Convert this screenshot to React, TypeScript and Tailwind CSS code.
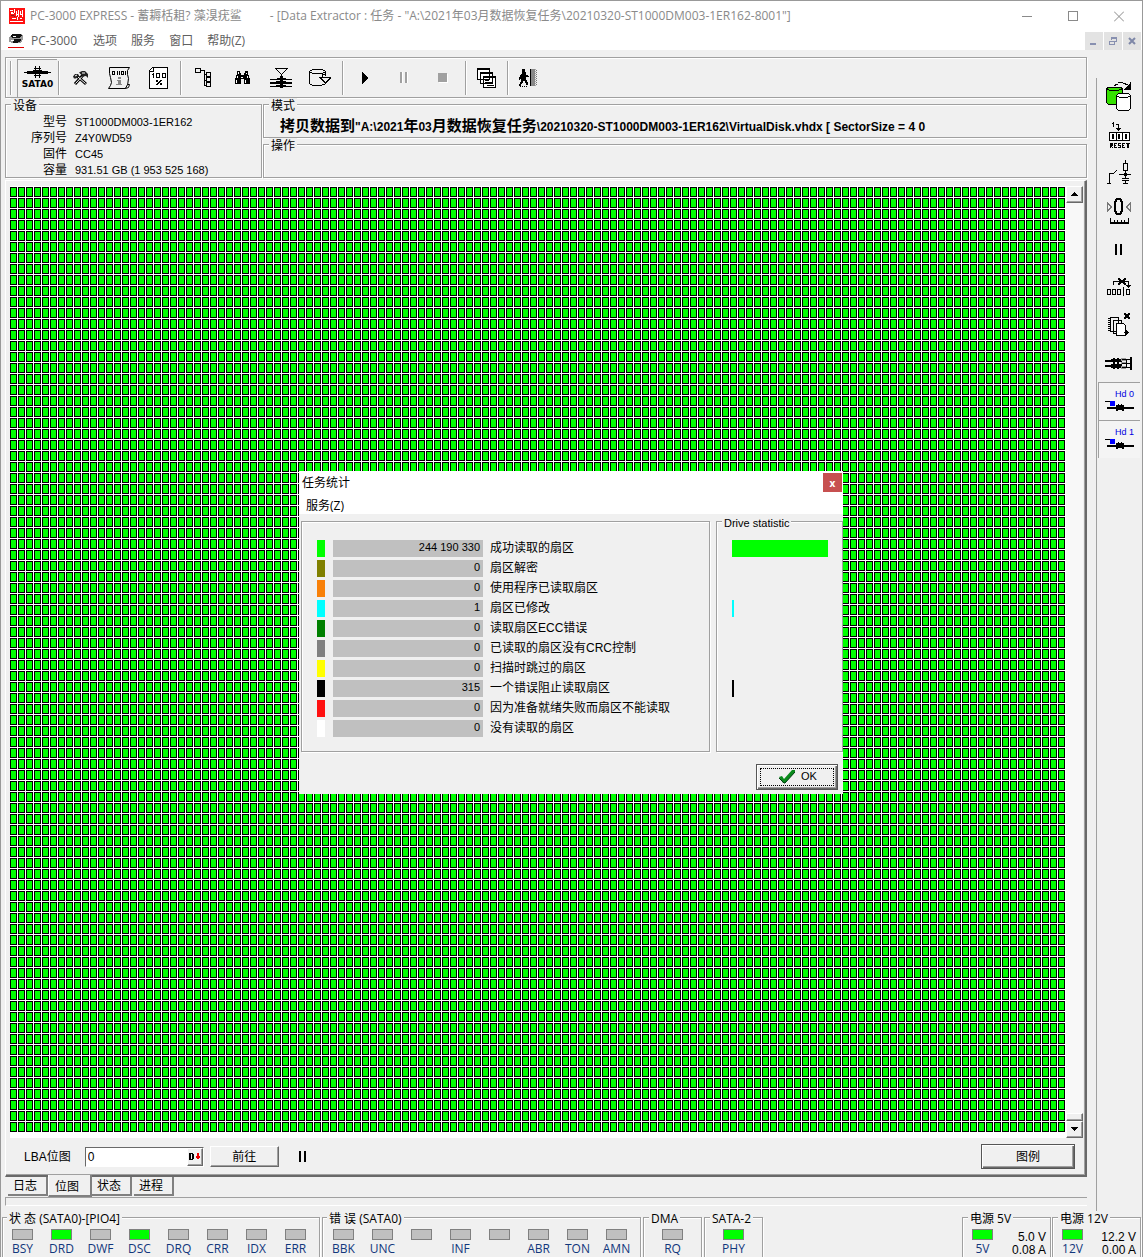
import React from "react";

const UI = "font-['Liberation_Sans','Noto_Sans_CJK_SC',sans-serif]";
const SEGOE = "font-['Open_Sans','Noto_Sans_CJK_SC',sans-serif]";
const ETCHED = "border border-[#a0a0a0] shadow-[1px_1px_0_#fff,inset_1px_1px_0_#fff]";

/* Pixel-aligned icon: the view box is given as x, y, width, height. */
function Pix({ box, children }: { box: [number, number, number, number]; children: React.ReactNode }) {
  return (
    <svg
      width={box[2]}
      height={box[3]}
      viewBox={box.join(" ")}
      shapeRendering="crispEdges"
      fill="none"
      stroke="none"
      className="block shrink-0"
      aria-hidden="true"
    >
      {children}
    </svg>
  );
}

function ToolButton({ label, children, narrow }: { label: string; children: React.ReactNode; narrow?: boolean }) {
  return (
    <button aria-label={label} className={`flex h-9 shrink-0 items-center justify-center ${narrow ? "w-9" : "w-[39px]"}`}>
      {children}
    </button>
  );
}

function Sep({ tight }: { tight?: boolean }) {
  return <div className={`h-[34px] w-0.5 shrink-0 border-l border-r border-l-[#a0a0a0] border-r-white ${tight ? "mx-px" : "mx-0.5"}`} />;
}

function Group({ title, className, titleClass, children }: { title: string; className: string; titleClass: string; children?: React.ReactNode }) {
  return (
    <section className={`relative ${ETCHED} ${className}`}>
      <h2 className={`absolute -top-2 whitespace-pre bg-[#f0f0f0] px-0.5 text-[12px] leading-4 ${titleClass}`}>{title}</h2>
      {children}
    </section>
  );
}

function TitleBar() {
  return (
    <header className={`bg-white ${SEGOE}`}>
      <div className="flex h-[30px] items-center pl-2 text-[12px] text-[#8a8a8a]">
        <Pix box={[9, 7, 16, 16]}>
          <rect x="9" y="7" width="16" height="16" fill="#ff1010" />
          <path d="M10 9h3v1h-3zM11 11h2v1h1v1h-3zM14 8h1v4h-1zM16 10h1v5h-1zM17 13h2v1h-2zM18 9h1v7h-1zM20 13h2v1h-2zM22 9h1v7h-1zM20 10h1v3h-1zM12 17h4v1h-4zM17 16h1v3h-1zM10 20h13v1h-13zM20 17h2v1h-2z" fill="#fff" />
          <path d="M11 14h3v1h-3zM14 15h1v1h-1z" fill="#802020" />
        </Pix>
        <h1 className="ml-[5px] whitespace-pre">PC-3000 EXPRESS - 蓄耨栝耝? 藻湨疣鲨</h1>
        <p className="ml-7 whitespace-pre">- [Data Extractor : 任务 - "A:\2021年03月数据恢复任务\20210320-ST1000DM003-1ER162-8001"]</p>
        <div className="ml-auto flex">
          <button aria-label="Minimize" className="flex h-[29px] w-[45px] items-center justify-center">
            <Pix box={[0, 0, 11, 11]}><path d="M0 5.500h10" stroke="#8a8a8a" /></Pix>
          </button>
          <button aria-label="Maximize" className="flex h-[29px] w-[46px] items-center justify-center">
            <Pix box={[0, 0, 10, 11]}><rect x=".5" y=".5" width="9" height="9" stroke="#8a8a8a" /></Pix>
          </button>
          <button aria-label="Close" className="flex h-[29px] w-[46px] items-center justify-center">
            <svg width="10" height="11" viewBox="0 0 10 11"><path d="M0 .5l10 10M10 .5l-10 10" stroke="#8a8a8a" /></svg>
          </button>
        </div>
      </div>
      <nav className="flex h-[19px] items-center pl-[7px] text-[12px] text-[#606060]">
        <Pix box={[8, 33, 16, 15]}>
          <path d="M12 34h9l2 1v4l-2 4h-9l-3-1v-4z" fill="#999" />
          <path d="M10 36l3-2h8l1 2-3 2h-7zM14 39h7v2l-4 2h-4z" fill="#111" />
          <path d="M13 36.500h3M11 40.500h3" stroke="#fff" />
          <path d="M8 47.500h16" stroke="#e00000" />
        </Pix>
        <button className="ml-[7px]">PC-3000</button>
        <button className="ml-4">选项</button>
        <button className="ml-[14px]">服务</button>
        <button className="ml-[14px]">窗口</button>
        <button className="ml-[14px]">帮助(Z)</button>
        <div className="ml-auto flex gap-px self-end pr-px">
          <button aria-label="Minimize child" className="h-[18px] w-[18px] bg-[#e3e3e3]">
            <Pix box={[0, 0, 18, 18]}><rect x="5" y="11" width="6" height="2" fill="#8890b0" /></Pix>
          </button>
          <button aria-label="Restore child" className="h-[18px] w-[18px] bg-[#e3e3e3]">
            <Pix box={[0, 0, 18, 18]}>
              <path d="M7.500 8V5.500h5v4H11M7 6.500h6M5.500 9.500h5v3h-5zM5 9.500h6" stroke="#8890b0" />
            </Pix>
          </button>
          <button aria-label="Close child" className="h-[18px] w-[18px] bg-[#e3e3e3]">
            <svg width="18" height="18" viewBox="0 0 18 18"><path d="M6 6l6 6M12 6l-6 6" stroke="#7f88a8" strokeWidth="2" /></svg>
          </button>
        </div>
      </nav>
    </header>
  );
}

function Toolbar() {
  return (
    <div className={`mt-[7px] flex h-[41px] items-center ${ETCHED}`}>
      <div className="ml-1 mr-[5px] h-[34px] w-0.5 border-l border-r border-l-[#a0a0a0] border-r-white" />
      <button className="flex h-[38px] w-10 flex-col items-center border-l border-t border-[#a0a0a0] pt-1.5">
        <Pix box={[22, 68, 31, 13]}>
          <path d="M24 74h27v1H24zM27 73h7v3h-7zM40 73h8v3h-8zM33 72h9v4h-9zM35 68h1v12h-1zM39 68h1v12h-1zM34 70h7v1h-7zM34 77h7v1h-7z" fill="#000" />
        </Pix>
        <span className="font-['DejaVu_Sans',sans-serif] text-[9px] font-bold leading-[11px]">SATA0</span>
      </button>
      <Sep tight />
      <ToolButton label="Tools">
        <svg width="19" height="18" viewBox="0 0 19 18" aria-hidden="true">
          <path d="M6 7l9 8M12 6l-8 9" stroke="#000" strokeWidth="3" />
          <path d="M7 8l7.500 6.500M11 7.500l-6.500 7" stroke="#fff" />
          <path d="M2 7.500l2-2.500h3l1 1.500-3 3H3z" fill="#222" />
          <path d="M4 7l2-1" stroke="#fff" />
          <path d="M8 3.500l3-1.500h3l3 3v4l-2-2-3 .5-2-2z" fill="#222" />
          <path d="M11 4h3" stroke="#fff" />
        </svg>
      </ToolButton>
      <ToolButton label="Firmware data">
        <svg width="25" height="24" viewBox="107 65 25 24" fill="none" aria-hidden="true">
          <path d="M109.500 66.500h20l-2 3v4l1 4-1 7-2 3h-17l2-3 1-3-1-5-1-4z" stroke="#000" />
          <path d="M125.500 87.500l2-4h2l-1 3z" fill="#fff" stroke="#000" />
          <path d="M112.500 70.500h2v3h-2zM117.500 70v4M119.500 70v4M121.500 70.500h2v3h-2zM125.500 70v4" stroke="#000" shapeRendering="crispEdges" />
          <path d="M118 76h3v2h-3zM117 79h4v4h1v1h-6v-1h2v-3h-1z" fill="#888" />
        </svg>
      </ToolButton>
      <ToolButton label="Progress">
        <Pix box={[147, 66, 23, 24]}>
          <path d="M152.500 67.500h15v21h-18v-18z" fill="#fff" stroke="#000" />
          <path d="M153.500 67v4.500H149" stroke="#000" />
          <path d="M153 73h1v5h-1zM152 74h1v1h-1zM156 73h4v5h-4zM162 73h4v5h-4zM156 80h2v2h-2zM161 80h1v1h-1v1h-1v1h-1v1h-1v1h-2v-1h1v-1h1v-1h1v-1h1v-1zM160 83h2v2h-2z" fill="#000" />
          <path d="M157 74h2v3h-2zM163 74h2v3h-2z" fill="#fff" />
        </Pix>
      </ToolButton>
      <Sep />
      <ToolButton label="Tree">
        <Pix box={[193, 68, 21, 22]}>
          <path d="M195.500 69.500h5v4h-5zM201 71.500h3.500v15M204 75.500h2M204 81.500h2M204 86.500h2M206.500 73.500h4v4h-4zM206.500 78.500h4v4h-4zM206.500 83.500h4v4h-4z" stroke="#000" />
        </Pix>
      </ToolButton>
      <ToolButton label="Search">
        <Pix box={[233, 69, 17, 16]}>
          <path d="M236 70h3v2h1v2h3v-2h1v-2h3v3l2 5v5h-6v-5h-3v5h-6v-5l2-5z" fill="#000" />
          <path d="M237.500 71v2M236.500 75v2M235.500 79v3M245.500 72v1M246.500 75v2M244.500 79v3M240 76.500h2" stroke="#fff" />
        </Pix>
      </ToolButton>
      <ToolButton label="Head map">
        <Pix box={[269, 67, 25, 22]}>
          <path d="M275 68h13v1h-13zM276 69h1v1h1v1h1v1h1v1h1v1h1v-1h1v-1h1v-1h1v-1h1v-1h1v1h-1v1h-1v1h-1v1h-1v1h-1v4h-1v-4h-1v-1h-1v-1h-1v-1h-1v-1h-1z" fill="#000" />
          <path d="M270 79h22v1h-22zM270 82h22v2h-22zM270 86h22v1h-22zM277 78h9v2h-9zM276 81h10v3h-10zM276 85h10v2h-10zM280 76h3v12h-3z" fill="#000" />
        </Pix>
      </ToolButton>
      <ToolButton label="Disk copy">
        <Pix box={[309, 68, 25, 20]}>
          <path d="M313 69h11v1h-11zM311 70h2v1h-2zM324 70h2v1h-2zM310 71h1v13h-1zM326 71h1v5h-1zM311 72h2v1h-2zM324 72h2v1h-2zM313 73h11v1h-11zM311 84h2v1h-2zM313 85h10v1h-10zM323 84h3v1h-3z" fill="#000" />
          <path d="M323.500 77v-2.500h3M320 77.500h12M321.500 78l5 5 5-5" stroke="#000" />
        </Pix>
      </ToolButton>
      <Sep />
      <ToolButton label="Start"><Pix box={[362, 72, 7, 12]}><path d="M362 72l6 6-6 6z" fill="#000" /></Pix></ToolButton>
      <ToolButton label="Pause"><Pix box={[400, 73, 9, 12]}><path d="M400 73h2v11h-2zM405 73h2v11h-2z" fill="#a0a0a0" /><path d="M402.500 73v11M407.500 73v11" stroke="#fff" /></Pix></ToolButton>
      <ToolButton label="Stop"><Pix box={[438, 74, 11, 10]}><rect x="439" y="75" width="9" height="9" fill="#fff" /><rect x="438" y="74" width="9" height="9" fill="#a0a0a0" /></Pix></ToolButton>
      <Sep />
      <ToolButton label="Windows" narrow>
        <Pix box={[475, 66, 22, 22]}>
          <path d="M476.500 67.500h12v11h-12zM479.500 71.500h12v11h-12zM482.500 75.500h12v11h-12z" fill="#fff" stroke="#000" />
          <path d="M476 68.500h13M479 72.500h13M482 76.500h13M484 79.500h4M484 81.500h7M486 84.500h7" stroke="#000" />
        </Pix>
      </ToolButton>
      <Sep />
      <ToolButton label="Exit" narrow>
        <Pix box={[519, 68, 22, 20]}>
          <path d="M523 69h3v3h1v3h2v1h1v1h-3v3h1v2h1v3h-2v-2h-1v-2h-2v2h-1v1h-1v2h-2v-2h1v-2h1v-3h-1v1h-1v-3h1v-2h1v-1h1z" fill="#000" />
          <path d="M531 69h1v17h-1z" fill="#000" />
          <path d="M532 69h4v17h-4z" fill="#888" />
          <path d="M536.500 69v17" stroke="#aaa" strokeDasharray="1 1" />
          <path d="M537.500 70v16" stroke="#777" strokeDasharray="1 1" />
          <path d="M521 86.500h7" stroke="#000" strokeDasharray="1 1" />
        </Pix>
      </ToolButton>
    </div>
  );
}

const device = [
  ["型号", "ST1000DM003-1ER162"],
  ["序列号", "Z4Y0WD59"],
  ["固件", "CC45"],
  ["容量", "931.51 GB (1 953 525 168)"],
];

function InfoPanels() {
  return (
    <div className="mt-1.5 flex gap-px">
      <Group title="设备" titleClass="left-[5px] mt-px" className="h-[74px] w-[257px] shrink-0 pt-[9px]">
        <dl className="grid grid-cols-[61px_1fr] gap-x-2">
          {device.map(([k, v]) => (
            <React.Fragment key={k}>
              <dt className="text-right text-[12px] leading-4">{k}</dt>
              <dd className="text-[11px] leading-4">{v}</dd>
            </React.Fragment>
          ))}
        </dl>
      </Group>
      <div className="flex min-w-0 flex-1 flex-col gap-1.5">
        <Group title="模式" titleClass="left-[5px] mt-px" className="h-[34px] pt-3">
          <p className="overflow-hidden whitespace-pre pl-4 text-[12px] font-bold leading-[18px]">
            <span className="text-[15px]">拷贝数据到</span>"A:\2021<span className="text-[15px]">年</span>03
            <span className="text-[15px]">月数据恢复任务</span>\20210320-ST1000DM003-1ER162\VirtualDisk.vhdx [ SectorSize = 4 0
          </p>
        </Group>
        <Group title="操作" titleClass="left-[5px] mt-px" className="h-[34px]" />
      </div>
    </div>
  );
}

const RAISED = "border border-b-[#696969] border-l-white border-r-[#696969] border-t-white shadow-[inset_-1px_-1px_0_#a0a0a0] bg-[#f0f0f0]";

function MapPanel() {
  return (
    <section className="mt-0.5 flex min-h-0 flex-1 flex-col border-b-2 border-l border-r-2 border-t border-b-[#696969] border-l-white border-r-[#696969] border-t-white pl-1 pr-0.5 pt-[5px] shadow-[inset_-1px_-1px_0_#a0a0a0]">
      <div className="flex min-h-0 flex-1">
        <div className="flex min-h-0 min-w-0 flex-1 flex-col bg-white pb-1.5 pt-px">
          <svg className="block min-h-0 w-full flex-1" shapeRendering="crispEdges" role="img" aria-label="Sector map">
            <defs>
              <pattern id="sector" width="8" height="11" patternUnits="userSpaceOnUse">
                <rect width="7" height="10" fill="#000" />
                <rect x="1" y="1" width="5" height="8" fill="#00ff00" />
              </pattern>
            </defs>
            <rect width="100%" height="100%" fill="url(#sector)" />
          </svg>
        </div>
        <div className="flex w-[17px] flex-col bg-[#f8f8f8]">
          <button aria-label="Scroll up" className={`flex h-[17px] items-center justify-center ${RAISED}`}>
            <Pix box={[0, 0, 7, 5]}><path d="M0 4h7v-1h-1v-1h-1v-1h-1v-1h-1v1h-1v1h-1v1h-1z" fill="#000" /></Pix>
          </button>
          <div className={`mt-auto h-2 ${RAISED}`} />
          <button aria-label="Scroll down" className={`flex h-[17px] items-center justify-center ${RAISED}`}>
            <Pix box={[0, 0, 7, 5]}><path d="M0 0h7v1h-1v1h-1v1h-1v1h-1v-1h-1v-1h-1v-1h-1z" fill="#000" /></Pix>
          </button>
        </div>
      </div>
      <div className="flex h-[37px] items-center pl-3.5">
        <label htmlFor="lba" className="text-[12px]">LBA位图</label>
        <div className="ml-3.5 flex h-5 w-[119px] border border-b-white border-l-[#696969] border-r-white border-t-[#696969] bg-white">
          <input id="lba" defaultValue="0" className="min-w-0 flex-1 px-0.5 text-[12px] outline-none" />
          <button aria-label="Decimal" className={`flex w-4 items-center justify-center ${RAISED}`}>
            <Pix box={[0, 0, 12, 10]}>
              <path d="M0 1h4v1h1v5h-1v1H0zM2 2v5h1V2z" fill="#000" fillRule="evenodd" />
              <path d="M8 1h2v3h1v2h-1v1H8V6H7V4h1z" fill="#e00" />
            </Pix>
          </button>
        </div>
        <button className={`ml-1.5 h-[21px] w-[69px] text-[12px] ${RAISED}`}>前往</button>
        <button aria-label="Pause" className="ml-5"><Pix box={[0, 0, 7, 11]}><path d="M0 0h2v11H0zM5 0h2v11H5z" fill="#000" /></Pix></button>
        <button className="ml-auto mr-2 h-[25px] w-[94px] border border-[#555] text-[12px] shadow-[inset_1px_1px_0_#fff,inset_-1px_-1px_0_#696969,inset_-2px_-2px_0_#a0a0a0]">图例</button>
      </div>
    </section>
  );
}

function Tabs() {
  const tab = "h-[19px] border-b-2 border-r-2 border-[#808080] pl-[5px] pt-px text-left text-[12px] leading-4";
  return (
    <div role="tablist" className="flex h-5 items-start pl-[3px]">
      <button role="tab" className={`w-10 border-r-0 ${tab}`}>日志</button>
      <button role="tab" aria-selected="true" className="relative -mt-0.5 h-[22px] w-11 border-b-2 border-l border-r-2 border-b-[#808080] border-l-white border-r-[#808080] bg-[#f0f0f0] pl-1.5 pt-1 text-left text-[12px] leading-4">位图</button>
      <button role="tab" className={`w-10 ${tab}`}>状态</button>
      <button role="tab" className={`ml-0.5 w-10 ${tab}`}>进程</button>
    </div>
  );
}

function HeadIcon() {
  return (
    <Pix box={[1105, 399, 29, 12]}>
      <path d="M1105 400h5v1h-5z" fill="#000" />
      <path d="M1107 406h27v2h-27zM1116 404h2v-1h1v1h2v-1h1v1h2v6h-2v-1h-4v1h-2z" fill="#000" />
      <rect x="1110" y="400" width="5" height="5" fill="#0000ff" />
    </Pix>
  );
}

function SideBar() {
  const b = "flex h-[38px] w-full items-center justify-center";
  return (
    <aside aria-label="Drive tools" className="ml-[9px] mt-7 flex w-[46px] shrink-0 flex-col border-l border-[#a0a0a0] pr-px">
      <button aria-label="Copy drive" className={b}>
        <Pix box={[1105, 81, 28, 32]}>
          <path d="M1106.500 88.500l2-1h12l2 1v14l-2 2h-12l-2-2z" fill="#35e000" stroke="#000" />
          <path d="M1107 89.500h2M1109 90.500h10M1119 89.500h3" stroke="#000" />
          <path d="M1116.500 95.500l2-2h10l2 2v13l-2 2h-10l-2-2z" fill="#fff" stroke="#000" />
          <path d="M1117 96.500h2M1119 97.500h9M1128 96.500h2M1114 85.500h2M1115 84.500h3M1118 82.500h5M1123 83.500h3M1125 84.500h3" stroke="#000" />
          <path d="M1131 82v8h-7v-1h1v-1h1v-1h1v-1h1v-1h1v-1h1v-2z" fill="#000" />
        </Pix>
      </button>
      <button aria-label="Reset" className={b}>
        <Pix box={[1105, 121, 28, 28]}>
          <path d="M1112 123h1v-1h1v5h-1v-3h-1zM1116 124h3v4h2v1h-1v1h-1v1h-1v-1h-1v-1h-1v-1h2v-3h-2z" fill="#000" />
          <path d="M1109.500 132.500h20v8h-20zM1116.500 133v7M1122.500 133v7" fill="#fff" stroke="#000" />
          <path d="M1112.500 134.500h1v4h-1zM1118.500 134.500h1v4h-1zM1125.500 134.500h1v4h-1z" stroke="#000" />
          <path d="M1110 143h3v3h-1v1h1v1h-1l-1-1v1h-1zM1114 143h3v1h-2v1h1v1h-1v1h2v1h-3zM1118 143h3v1h-2v1h2v3h-3v-1h2v-1h-2zM1122 143h3v1h-2v1h1v1h-1v1h2v1h-3zM1126 143h4v1h-1v4h-2v-4h-1z" fill="#000" />
        </Pix>
      </button>
      <button aria-label="Power" className={b}>
        <Pix box={[1105, 161, 28, 26]}>
          <path d="M1107 184.500h4M1109.500 184v-9.500h4M1113 174.500h1M1114 173.500h1M1115 172.500h1M1116 171.500h1M1125.500 161v3M1123.500 164.500h4v7h-4zM1125.500 172v7M1119 175.500h12M1122 179.500h7M1122 181.500h7M1125.500 182v3M1123 184.500h5" stroke="#000" />
          <rect x="1124" y="174" width="3" height="3" fill="#000" />
        </Pix>
      </button>
      <button aria-label="Recalibrate" className={b}>
        <Pix box={[1105, 197, 28, 28]}>
          <path d="M1116 198h5v1h1v2h1v11h-1v2h-1v1h-5v-1h-1v-2h-1v-11h1v-2h1zM1117 200v2h-1v9h1v2h3v-2h1v-9h-1v-2z" fill="#000" fillRule="evenodd" />
          <path d="M1107.500 203v8l4-4zM1130.500 203v8l-4-4z" stroke="#777" />
          <path d="M1110 222h19v2h-19zM1110 218h1v5h-1zM1114 220h1v3h-1zM1117 220h1v3h-1zM1121 220h1v3h-1zM1124 220h1v3h-1zM1128 218h1v5h-1z" fill="#000" />
        </Pix>
      </button>
      <button aria-label="Pause" className={b}>
        <Pix box={[1115, 242, 8, 12]}><path d="M1115 243h2v11h-2zM1120 243h2v11h-2z" fill="#000" /></Pix>
      </button>
      <button aria-label="Skip sector" className={b}>
        <Pix box={[1105, 275, 28, 20]}>
          <path d="M1107.500 287.500h3v5h-3zM1112.500 287.500h3v5h-3zM1117.500 287.500h3v5h-3zM1123.500 285v9M1126.500 287.500h3v5h-3zM1113.500 283v-3.500h15v4" stroke="#000" />
          <path d="M1118 276h2v1h1v1h2v-1h1v-1h2v2h-1v1h-1v1h1v1h1v2h-2v-1h-1v-1h-2v1h-1v1h-2v-2h1v-1h1v-1h-1v-1h-1zM1126 283h5v1h-1v1h-1v1h-1v-1h-1v-1h-1z" fill="#000" />
        </Pix>
      </button>
      <button aria-label="Discard pages" className={b}>
        <Pix box={[1105, 312, 28, 28]}>
          <path d="M1110.500 318.500h8v14h-8zM1113.500 321.500h8v13h-8z" fill="#f0f0f0" stroke="#000" />
          <path d="M1116.500 324.500h7l2 2v10h-9z" fill="#fff" stroke="#000" />
          <path d="M1108 319.500h2M1108 321.500h2M1108 323.500h2M1108 325.500h2M1108 327.500h2M1108 329.500h2M1108 331.500h2M1124 333.500h5" stroke="#000" />
          <path d="M1124 314h2v1h2v-1h2v2h-1v2h1v2h-2v-1h-2v1h-2v-2h1v-2h-1zM1126 331h1v1h1v1h1v1h-1v1h-1v1h-1z" fill="#000" />
        </Pix>
      </button>
      <button aria-label="Head stack" className={b}>
        <Pix box={[1105, 355, 30, 16]}>
          <path d="M1106 360h17v2h-17zM1106 365h17v2h-17zM1112 359h11v3h-11zM1112 364h11v4h-11zM1114 358h2v11h-2zM1118 358h2v11h-2z" fill="#000" />
          <path d="M1122 358h5v3h-5zM1122 362h5v2h-5zM1122 366h5v3h-5z" fill="#999" />
          <path d="M1123 359h9v1h-9zM1123 363h9v1h-9zM1123 367h9v1h-9zM1127 359h1v9h-1zM1131 357h2v13h-2z" fill="#000" />
        </Pix>
      </button>
      {["Hd 0", "Hd 1"].map((t) => (
        <button key={t} className="ml-px flex h-[38px] w-[42px] flex-col items-end border-l border-t border-[#a0a0a0] bg-[#f4f4f4] pr-1.5 pt-1.5 text-[9px] leading-[11px] text-[#0000e0]">
          {t}
          <HeadIcon />
        </button>
      ))}
    </aside>
  );
}

function Led({ on, name }: { on?: boolean; name: string }) {
  return (
    <li className="flex w-[39px] flex-col items-center text-[12px] leading-[18px] text-[#12377c]">
      <span className={`h-[11px] w-[21px] shrink-0 border border-[#808080] ${on ? "bg-[#00ff00]" : "bg-[#c0c0c0]"}`} />
      {name}
    </li>
  );
}

function StatusBar() {
  const list = "flex pt-[11px]";
  return (
    <footer className={`flex h-10 shrink-0 gap-0.5 px-px ${SEGOE}`}>
      <Group title="状 态 (SATA0)-[PIO4]" titleClass="left-1 mt-px" className="h-12 w-[318px]">
        <ul className={list}>
          {["BSY", "DRD", "DWF", "DSC", "DRQ", "CRR", "IDX", "ERR"].map((n) => <Led key={n} name={n} on={n === "DRD" || n === "DSC"} />)}
        </ul>
      </Group>
      <Group title="错 误 (SATA0)" titleClass="left-1 mt-px" className="h-12 w-[319px]">
        <ul className={`${list} pl-px`}>
          {["BBK", "UNC", "", "INF", "", "ABR", "TON", "AMN"].map((n, i) => <Led key={i} name={n} />)}
        </ul>
      </Group>
      <Group title="DMA" titleClass="left-[5px] mt-px" className="h-12 w-[59px]"><ul className={`${list} justify-center`}><Led name="RQ" /></ul></Group>
      <Group title="SATA-2" titleClass="left-[5px] mt-px" className="h-12 w-[59px]"><ul className={`${list} justify-center`}><Led name="PHY" on /></ul></Group>
      <div className="ml-auto flex gap-px">
        {[["电源 5V", "5V", "5.0 V", "0.08 A"], ["电源 12V", "12V", "12.2 V", "0.00 A"]].map(([t, n, v, a]) => (
          <Group key={t} title={t} titleClass="left-[5px] mt-px" className="flex h-12 w-[89px] pr-1">
            <ul className={list}><Led name={n} on /></ul>
            <p className={`ml-auto pt-[13px] text-right text-[12px] leading-[13px] ${UI}`}>{v}<br />{a}</p>
          </Group>
        ))}
      </div>
    </footer>
  );
}

const stats: [string, string, string][] = [
  ["bg-[#00ff00]", "244 190 330", "成功读取的扇区"],
  ["bg-[#808000]", "0", "扇区解密"],
  ["bg-[#f88008]", "0", "使用程序已读取扇区"],
  ["bg-[#00ffff]", "1", "扇区已修改"],
  ["bg-[#008000]", "0", "读取扇区ECC错误"],
  ["bg-[#808080]", "0", "已读取的扇区没有CRC控制"],
  ["bg-[#ffff00]", "0", "扫描时跳过的扇区"],
  ["bg-black", "315", "一个错误阻止读取扇区"],
  ["bg-[#ff1010]", "0", "因为准备就绪失败而扇区不能读取"],
  ["bg-white", "0", "没有读取的扇区"],
];

function StatsDialog() {
  return (
    <div className="absolute inset-0 flex items-center justify-center pr-px pt-1.5">
      <div role="dialog" aria-label="任务统计" className="w-[544px] overflow-hidden bg-[#f0f0f0] pb-1">
        <div className={`h-[43px] bg-white ${SEGOE}`}>
          <div className="flex h-6 items-center justify-between pl-[3px] pr-px text-[12px]">
            <h2>任务统计</h2>
            <button aria-label="Close" className="flex h-[19px] w-[19px] items-center justify-center bg-[#c75050] text-[10px] font-bold leading-none text-white">x</button>
          </div>
          <button className="ml-[7px] block text-[12px] leading-[22px]">服务(Z)</button>
        </div>
        <div className="mt-[7px] flex justify-between pl-0.5">
          <div className={`h-[231px] w-[409px] pl-[15px] pt-[18px] ${ETCHED}`}>
            <table className="border-collapse">
              <tbody>
                {stats.map(([c, n, label]) => (
                  <tr key={label} className="h-5 align-top">
                    <td className="w-4 p-0"><div className={`h-[17px] w-2 ${c}`} /></td>
                    <td className="p-0"><div className="h-[17px] w-[150px] bg-[#c0c0c0] pr-[3px] text-right text-[11px] leading-[14px]">{n}</div></td>
                    <th scope="row" className="whitespace-nowrap p-0 pl-[7px] text-left text-[12px] font-normal leading-4">{label}</th>
                  </tr>
                ))}
              </tbody>
            </table>
          </div>
          <section className={`relative h-[231px] w-[127px] pl-[15px] pt-[18px] ${ETCHED}`}>
            <h3 className="absolute -top-1.5 left-[5px] bg-[#f0f0f0] px-0.5 text-[11px] leading-[14px]">Drive statistic</h3>
            {stats.map(([c, n, label]) => (
              <div key={label} className="h-5">
                {n !== "0" && <div className={`h-[17px] ${c} ${n.length > 3 ? "w-24" : "w-0.5"}`} />}
              </div>
            ))}
          </section>
        </div>
        <button className="ml-auto mr-[5px] mt-3 flex h-[26px] w-[82px] border border-[#555] p-[3px] text-[11px] shadow-[inset_1px_1px_0_#fff,inset_-1px_-1px_0_#696969,inset_-2px_-2px_0_#a0a0a0]">
          <span className="flex h-full w-full items-center justify-center gap-1.5 border border-dotted border-black pl-0.5">
            <svg width="16" height="14" viewBox="0 0 16 14" aria-hidden="true">
              <path d="M0 7l3-1 2 3L13 0h3v2L6 13H4z" fill="#0a8a1c" />
              <path d="M0 8l5 5h1L16 2" fill="none" stroke="#003c10" />
            </svg>
            OK
          </span>
        </button>
      </div>
    </div>
  );
}

export default function App() {
  return (
    <div className={`relative flex min-h-screen flex-col overflow-hidden border-l border-r border-t border-[#999] bg-[#f0f0f0] text-black ${UI}`}>
      <TitleBar />
      <div className="flex flex-1">
        <main className="flex min-w-0 flex-1 flex-col pl-1">
          <Toolbar />
          <InfoPanels />
          <MapPanel />
          <Tabs />
          <div className="mb-[11px] h-[9px] border-b border-l border-t border-b-white border-l-[#a0a0a0] border-t-[#a0a0a0]" />
        </main>
        <SideBar />
      </div>
      <StatusBar />
      <StatsDialog />
    </div>
  );
}
